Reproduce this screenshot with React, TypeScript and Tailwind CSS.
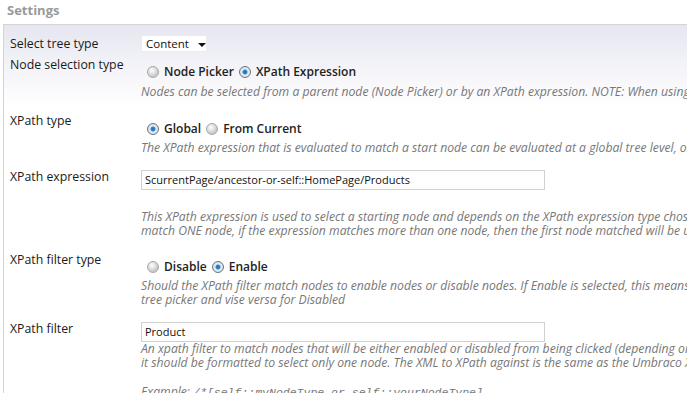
import React from 'react';

const font = { fontFamily: '"Open Sans", "Liberation Sans", sans-serif' };

function Radio({ checked, label }: { checked?: boolean; label: string }) {
  return (
    <span className="inline-flex items-center mr-[5px]">
      {checked ? (
        <span className="w-[12px] h-[12px] rounded-full border border-[#6a7482] bg-[radial-gradient(circle,#1f6fb8_0,#2e86d0_2px,#e9eef3_3px,#cfd6dd_6px)]" />
      ) : (
        <span className="w-[12px] h-[12px] rounded-full border border-[#a8a8a8] bg-[radial-gradient(circle_at_40%_35%,#ffffff_0,#e4e4e4_3px,#c8c8c8_6px)]" />
      )}
      <span className="ml-[5px] text-[12px] font-semibold text-[#222]">{label}</span>
    </span>
  );
}

function Desc({ children }: { children: React.ReactNode }) {
  return <div className="text-[12.2px] leading-[14px] italic text-[#777] whitespace-nowrap">{children}</div>;
}

function Row({ label, children, className }: { label: string; children: React.ReactNode; className?: string }) {
  return (
    <div className={`flex ${className ?? ''}`}>
      <div className="w-[137px] shrink-0 text-[12.3px] leading-[14px] text-[#1a1a1a] pl-[6px]">{label}</div>
      <div className="flex-1 min-w-0">{children}</div>
    </div>
  );
}

export default function App() {
  return (
    <div className="w-[687px] h-[393px] overflow-hidden bg-white" style={font}>
      <div className="h-[24px] pl-[7px] pt-[1px] text-[13px] font-bold text-[#9a9a9a]">Settings</div>
      <div className="ml-[3px] border-l border-t border-[#d4d4d4] bg-[linear-gradient(to_bottom,#e6e6f1,#ffffff_80px)] pt-[10px] h-[369px]">
        <Row label="Select tree type" className="items-center">
          <div className="w-[66px] h-[17px] bg-white border border-[#ececec] flex items-center pl-[4px] text-[11.5px] text-[#111]">
            Content
            <span className="ml-[9px] w-0 h-0 border-l-[4px] border-r-[4px] border-t-[4px] border-l-transparent border-r-transparent border-t-[#111] mt-[2px]" />
          </div>
        </Row>

        <Row label="Node selection type" className="mt-[6px]">
          <div className="pt-[6px] pl-[6px] h-[22px] flex items-center">
            <Radio label="Node Picker" />
            <Radio checked label="XPath Expression" />
          </div>
          <div className="mt-[5px]">
            <Desc>Nodes can be selected from a parent node (Node Picker) or by an XPath expression. NOTE: When using an XPath expression the tree will only show one node</Desc>
          </div>
        </Row>

        <Row label="XPath type" className="mt-[15px]">
          <div className="pt-[7px] pl-[6px] h-[23px] flex items-center">
            <Radio checked label="Global" />
            <Radio label="From Current" />
          </div>
          <div className="mt-[4px]">
            <Desc>The XPath expression that is evaluated to match a start node can be evaluated at a global tree level, or from the current node being edited</Desc>
          </div>
        </Row>

        <Row label="XPath expression" className="mt-[15px]">
          <div className="w-[404px] h-[20px] border border-[#d0d0d0] bg-white flex items-center pl-[3px] text-[11px] text-[#111]">
            ScurrentPage/ancestor-or-self::HomePage/Products
          </div>
          <div className="mt-[20px]">
            <Desc>This XPath expression is used to select a starting node and depends on the XPath expression type chosen (global or from current). IMPORTANT: This expression must</Desc>
            <Desc>match ONE node, if the expression matches more than one node, then the first node matched will be used as the start node.</Desc>
          </div>
        </Row>

        <Row label="XPath filter type" className="mt-[15px]">
          <div className="pt-[6px] pl-[6px] h-[22px] flex items-center">
            <Radio label="Disable" />
            <Radio checked label="Enable" />
          </div>
          <div className="mt-[4px]">
            <Desc>Should the XPath filter match nodes to enable nodes or disable nodes. If Enable is selected, this means that only nodes that match the XPath filter will be selectable in the</Desc>
            <Desc>tree picker and vise versa for Disabled</Desc>
          </div>
        </Row>

        <Row label="XPath filter" className="mt-[15px]">
          <div className="w-[404px] h-[20px] border border-[#d0d0d0] bg-white flex items-center pl-[3px] text-[11px] text-[#111]">
            Product
          </div>
          <div className="mt-[0px]">
            <Desc>An xpath filter to match nodes that will be either enabled or disabled from being clicked (depending on what is selected for the XPath filter type). This XPath filter</Desc>
            <Desc>it should be formatted to select only one node. The XML to XPath against is the same as the Umbraco XML for one node.</Desc>
            <div className="mt-[15px] text-[12.2px] leading-[14px] italic text-[#777] whitespace-nowrap">
              Example: <span className="text-[11.5px]" style={{ fontFamily: '"Liberation Mono", monospace' }}>/*[self::myNodeType or self::yourNodeType]</span>
            </div>
          </div>
        </Row>
      </div>
    </div>
  );
}
